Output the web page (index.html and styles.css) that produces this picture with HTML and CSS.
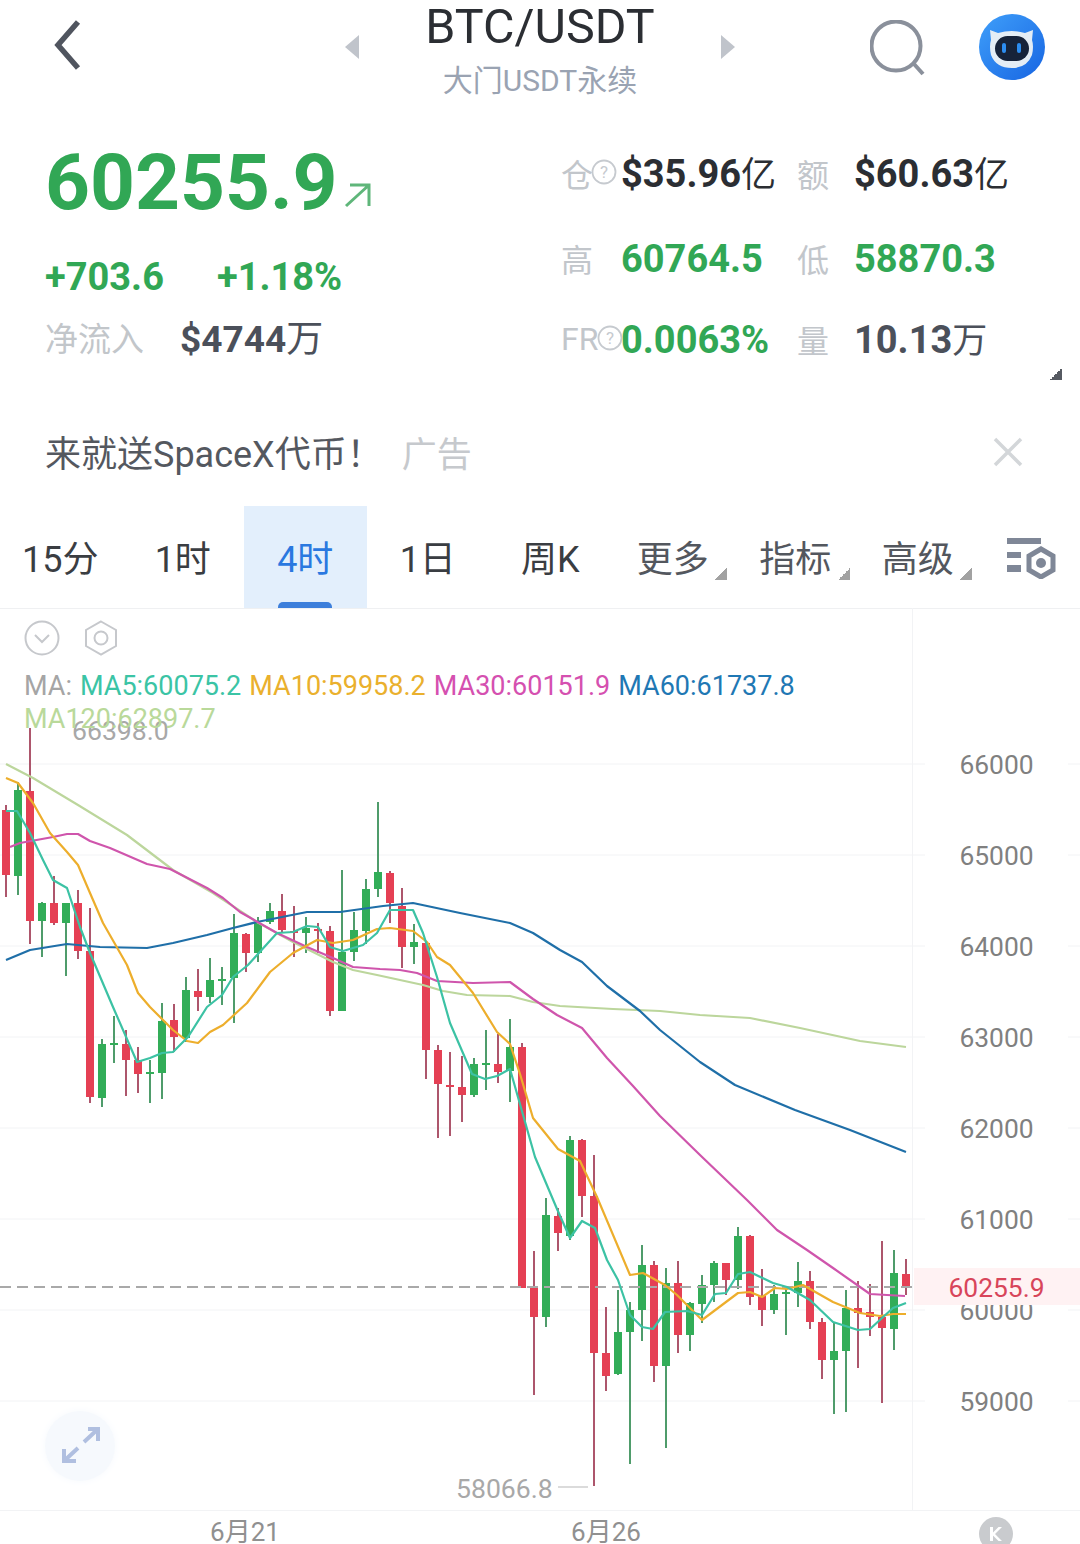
FILE: index.html
```html
<!DOCTYPE html>
<html lang="zh">
<head>
    <meta charset="utf-8">
    <title>BTC/USDT</title>
    <meta name="viewport" content="width=device-width, initial-scale=1">
    <link rel="stylesheet" href="styles.css">
</head>
<body>
<div class="page">

    <header class="topbar">
        <div class="topbar-left">
            <svg class="back-icon" width="36" height="56" viewBox="0 0 36 56"><path d="M26 4L6 27L26 50"/></svg>
            <svg class="nav-arrow" width="16" height="24" viewBox="0 0 16 24"><path d="M15 0V24L1 12Z"/></svg>
        </div>
        <div class="title-block">
            <div class="title">BTC/USDT</div>
            <div class="subtitle">大门USDT永续</div>
        </div>
        <div class="topbar-right">
            <svg class="nav-arrow next" width="16" height="24" viewBox="0 0 16 24"><path d="M1 0V24L15 12Z"/></svg>
            <svg class="search-icon" width="56" height="56" viewBox="0 0 56 56"><circle cx="26" cy="26" r="24.5"/><path d="M44 44L53 54"/></svg>
            <svg class="avatar" width="68" height="68" viewBox="0 0 68 68">
                <defs>
                    <linearGradient id="avatarBg" x1="0" y1="0" x2="1" y2="1">
                        <stop offset="0" stop-color="#3f9ffa"/>
                        <stop offset="1" stop-color="#1765e2"/>
                    </linearGradient>
                </defs>
                <circle cx="34" cy="34" r="33" fill="url(#avatarBg)"/>
                <path d="M12 17L20 20Q34 16 47 20L55 17L54 27Q56 33 54 42Q49 55 34 55Q18 55 13 42Q11 33 13 27Z" fill="#e4edf5"/>
                <rect x="17" y="23" width="34" height="25" rx="12.5" fill="#16233a"/>
                <rect x="24" y="30" width="4" height="10" rx="2" fill="#2c8df0"/>
                <rect x="39" y="30" width="4" height="10" rx="2" fill="#2c8df0"/>
            </svg>
        </div>
    </header>

    <section class="quote">
        <div class="quote-main">
            <div class="price-line">
                <span class="price">60255.9</span>
                <svg class="price-arrow" width="28" height="26" viewBox="0 0 28 26"><path d="M2 24L25 3M6 3H25V24"/></svg>
            </div>
            <div class="change-line">
                <span>+703.6</span>
                <span>+1.18%</span>
            </div>
            <div class="inflow-line">
                <span class="inflow-label">净流入</span>
                <span class="inflow-value">$4744<span class="unit">万</span></span>
            </div>
        </div>
        <div class="stats">
            <span class="stat-label">仓<svg class="help-icon" width="26" height="26" viewBox="0 0 26 26"><circle cx="13" cy="13" r="11.5"/><text x="13" y="19">?</text></svg></span>
            <span class="stat-value">$35.96<span class="unit">亿</span></span>
            <span class="stat-label">额</span>
            <span class="stat-value">$60.63<span class="unit">亿</span></span>

            <span class="stat-label">高</span>
            <span class="stat-value up">60764.5</span>
            <span class="stat-label">低</span>
            <span class="stat-value up">58870.3</span>

            <span class="stat-label">FR<svg class="help-icon overlap" width="26" height="26" viewBox="0 0 26 26"><circle cx="13" cy="13" r="11.5"/><text x="13" y="19">?</text></svg></span>
            <span class="stat-value up">0.0063%</span>
            <span class="stat-label">量</span>
            <span class="stat-value muted">10.13<span class="unit">万</span></span>
        </div>
        <span class="expand-corner"></span>
    </section>

    <section class="ad">
        <span class="ad-text">来就送SpaceX代币！</span>
        <span class="ad-tag">广告</span>
        <svg class="ad-close" width="30" height="30" viewBox="0 0 30 30"><path d="M2 2L28 28M28 2L2 28"/></svg>
    </section>

    <nav class="tabs">
        <div class="tab">15分</div>
        <div class="tab">1时</div>
        <div class="tab active">4时</div>
        <div class="tab">1日</div>
        <div class="tab">周K</div>
        <div class="tab menu">更多</div>
        <div class="tab menu">指标</div>
        <div class="tab menu">高级</div>
        <svg class="settings-icon" width="50" height="44" viewBox="0 0 50 44">
            <path class="bars" d="M1 3H35V9H1ZM1 17H15V23H1ZM1 30H15V37H1Z"/>
            <path class="hex" d="M35 14L47 21V35L35 42L23 35V21Z"/>
            <circle class="hex-dot" cx="35" cy="28" r="5"/>
        </svg>
    </nav>

    <section class="chart">
        <svg class="chart-canvas" width="1080" height="936" viewBox="0 608 1080 936">
            <path class="grid" d="M0 764H925M1068 764H1080M0 855H925M1068 855H1080M0 946H925M1068 946H1080M0 1037H925M1068 1037H1080M0 1128H925M1068 1128H1080M0 1219H925M1068 1219H1080M0 1310H925M1068 1310H1080M0 1401H925M1068 1401H1080"/>
            <path class="grid" d="M912.5 608V1510"/>

            <path class="wick-red" d="M6 805V897M30 728V944M54 876V925M78 890V959M90 908V1103M126 1030V1096M138 1047V1093M174 1004V1052M198 969V1011M246 933V972M282 894V933M294 906V957M318 923V953M330 926V1016M390 871V923M402 888V968M426 943V1079M438 1045V1138M450 1052V1136M462 1056V1122M498 1034V1083M522 1043V1288M534 1251V1395M558 1208V1251M582 1139V1217M594 1155V1486M606 1307V1391M654 1261V1382M678 1261V1353M726 1263V1295M750 1235V1305M762 1269V1326M810 1271V1329M822 1318V1379M858 1281V1368M870 1284V1336M882 1241V1403M906 1259V1295"/>
            <path class="wick-green" d="M18 782V895M42 902V957M66 903V976M102 1039V1107M114 1016V1063M150 1060V1103M162 1003V1099M186 977V1042M210 958V1003M222 967V1005M234 914V1023M258 917V962M270 903V924M306 917V953M342 870V1011M354 912V961M366 879V944M378 802V897M414 924V964M474 1058V1097M486 1030V1090M510 1019V1102M546 1198V1327M570 1136V1240M618 1290V1375M630 1302V1464M642 1245V1341M666 1268V1448M690 1302V1351M702 1275V1323M714 1261V1302M738 1227V1289M774 1285V1314M786 1287V1335M798 1262V1307M834 1322V1414M846 1290V1412M894 1250V1350"/>
            <path class="body-red" d="M6 810V875M30 791V921M54 903V923M78 903V951M90 951V1097M126 1044V1060M138 1060V1074M174 1020V1037M198 991V997M246 934V953M282 911V930M294 931V933M318 929V931M330 931V1011M390 873V903M402 906V947M426 943V1050M438 1050V1084M450 1085V1087M462 1087V1095M498 1064V1072M522 1047V1288M534 1288V1317M558 1216V1233M582 1140V1196M594 1196V1353M606 1353V1376M654 1265V1366M678 1283V1335M726 1263V1280M750 1236V1297M762 1296V1310M810 1281V1322M822 1322V1360M858 1308V1313M870 1312V1317M882 1317V1328M906 1274V1287"/>
            <path class="body-green" d="M18 790V876M42 903V921M66 903V923M102 1044V1098M114 1043V1045M150 1072V1074M162 1021V1073M186 990V1038M210 980V997M222 979V981M234 933V978M258 923V953M270 911V922M306 928V933M342 952V1011M354 930V952M366 889V931M378 872V889M414 942V947M474 1064V1095M486 1063V1065M510 1047V1071M546 1215V1317M570 1140V1236M618 1332V1374M630 1310V1332M642 1265V1310M666 1283V1366M690 1303V1335M702 1285V1304M714 1263V1285M738 1236V1280M774 1294V1310M786 1292V1294M798 1281V1293M834 1351V1360M846 1308V1351M894 1273V1329"/>

            <path class="last-line" d="M0 1287H912"/>

            <polyline class="ma ma120" points="6,764 33,778 78,805 127,835 173,870 213,893 257,922 293,942 333,962 353,970 377,975 400,980 423,985 443,991 467,995 510,996 533,1002 560,1006 613,1009 660,1011 700,1015 750,1018 800,1028 860,1041 906,1047"/>
            <polyline class="ma ma60" points="6,960 30,950 67,944 100,947 147,948 173,943 207,935 233,928 257,922 307,912 340,912 383,906 413,903 460,913 510,923 533,933 560,950 582,962 607,986 640,1011 660,1030 700,1062 735,1085 795,1110 850,1130 906,1152"/>
            <polyline class="ma ma30" points="10,847 20,843 53,837 67,834 78,834 90,841 110,848 147,864 170,869 207,888 223,898 240,912 277,933 307,947 333,958 353,967 380,969 400,970 417,973 437,981 473,983 510,982 533,999 557,1015 582,1028 607,1058 633,1086 660,1116 700,1155 747,1200 777,1230 807,1250 833,1268 870,1294 887,1295 905,1296"/>
            <polyline class="ma ma10" points="6,778 18,783 33,803 50,833 67,852 78,865 90,893 103,923 127,965 138,993 150,1007 173,1030 187,1041 198,1043 210,1032 223,1025 247,1003 270,972 293,953 317,940 333,943 353,940 377,929 390,928 413,931 427,942 437,957 450,965 473,993 497,1032 510,1044 520,1074 533,1118 558,1149 580,1161 597,1197 630,1275 643,1273 665,1285 677,1295 702,1320 738,1293 750,1292 762,1297 775,1288 787,1289 803,1285 833,1302 860,1313 880,1316 893,1314 906,1314"/>
            <polyline class="ma ma5" points="6,811 17,811 30,833 43,860 53,880 67,888 80,927 90,953 113,1007 137,1062 150,1058 162,1053 173,1052 188,1037 207,1007 222,995 233,977 248,965 277,933 293,932 307,926 318,927 330,947 343,951 363,945 377,933 390,910 413,910 423,933 437,977 450,1023 472,1074 485,1079 497,1076 510,1069 535,1157 557,1209 570,1238 582,1221 595,1228 607,1260 618,1280 630,1315 642,1327 653,1329 665,1312 687,1311 702,1315 715,1294 726,1293 738,1274 750,1272 773,1283 787,1287 810,1300 833,1322 858,1330 870,1329 893,1308 906,1303"/>

            <text class="axis" x="996.5" y="774">66000</text>
            <text class="axis" x="996.5" y="865">65000</text>
            <text class="axis" x="996.5" y="956">64000</text>
            <text class="axis" x="996.5" y="1047">63000</text>
            <text class="axis" x="996.5" y="1138">62000</text>
            <text class="axis" x="996.5" y="1229">61000</text>
            <text class="axis" x="996.5" y="1320">60000</text>
            <text class="axis" x="996.5" y="1411">59000</text>
            <rect class="last-bg" x="914" y="1268" width="166" height="37"/>
            <text class="axis last-price" x="996.5" y="1297">60255.9</text>

            <text class="extreme" x="72" y="740">66398.0</text>
            <text class="extreme" x="456" y="1498">58066.8</text>
            <path class="extreme-line" d="M558 1487H588"/>

            <path class="grid" d="M0 1510.5H1080"/>
            <text class="date" x="245" y="1541">6月21</text>
            <text class="date" x="606" y="1541">6月26</text>
        </svg>

        <div class="chart-tools">
            <svg class="tool-icon" width="36" height="36" viewBox="0 0 36 36"><circle cx="18" cy="18" r="16.5"/><path d="M11 15L18 22L25 15"/></svg>
            <svg class="tool-icon" width="36" height="36" viewBox="0 0 36 36"><path d="M18 1.5L33 10V26L18 34.5L3 26V10Z"/><circle cx="18" cy="18" r="6.5"/></svg>
        </div>
        <div class="legend">
            <span class="legend-name">MA:</span>
            <span class="ma5-text">MA5:60075.2</span>
            <span class="ma10-text">MA10:59958.2</span>
            <span class="ma30-text">MA30:60151.9</span>
            <span class="ma60-text">MA60:61737.8</span>
            <span class="ma120-text">MA120:62897.7</span>
        </div>

        <div class="zoom-button">
            <svg width="44" height="44" viewBox="0 0 44 44"><path d="M30 5H40V17M40 5L26 18M6 25V37H18M6 37L20 24"/></svg>
        </div>
        <div class="k-badge">
            <svg width="18" height="18" viewBox="0 0 18 18"><path d="M3 2H6V16H3ZM15 2L8 9L15 16H11.5L4.5 9L11.5 2Z"/></svg>
        </div>
    </section>
</div>
</body>
</html>
```

FILE: styles.css
```css
* {
    box-sizing: border-box;
}

body {
    margin: 0;
    background-color: #ffffff;
    font-family: Roboto, "Noto Sans CJK SC", sans-serif;
}

.page {
    position: relative;
    width: 1080px;
    height: 1544px;
    overflow: hidden;
}

/* top bar */
.topbar {
    display: grid;
    grid-template-columns: 1fr auto 1fr;
    height: 100px;
}

.topbar-left {
    display: flex;
    justify-content: space-between;
    padding: 18px 65px 0 52px;
}

.topbar-right {
    display: flex;
    align-items: flex-start;
    padding: 13px 0 0 65px;
}

.back-icon {
    fill: none;
    stroke: #50555f;
    stroke-width: 5.5;
}

.nav-arrow {
    margin-top: 17px;
    fill: #c0c4cb;
}

.nav-arrow.next {
    margin-top: 22px;
}

.search-icon {
    margin: 7px 0 0 134px;
    fill: none;
    stroke: #8a909b;
    stroke-width: 4;
}

.avatar {
    margin-left: 52px;
}

.title-block {
    text-align: center;
}

.title {
    font-size: 48.4px;
    line-height: 54px;
    color: #2b2e33;
}

.subtitle {
    font-size: 30px;
    line-height: 40px;
    margin-top: 7px;
    color: #9aa3b2;
}

/* quote block */
.quote {
    position: relative;
    display: flex;
    height: 310px;
}

.quote-main {
    width: 561px;
    padding: 37px 0 0 45px;
}

.price-line {
    display: flex;
    height: 90px;
    align-items: center;
}

.price {
    font-size: 78.4px;
    font-weight: 700;
    line-height: 90px;
    color: #31a755;
}

.price-arrow {
    margin: 26px 0 0 6px;
    fill: none;
    stroke: #5fb67a;
    stroke-width: 3;
}

.change-line {
    display: flex;
    gap: 53px;
    margin-top: 27px;
    font-size: 38px;
    font-weight: 700;
    line-height: 46px;
    color: #31a755;
}

.inflow-line {
    display: flex;
    margin-top: 17px;
    line-height: 46px;
}

.inflow-label {
    width: 135px;
    font-size: 33px;
    color: #c2c6ca;
}

.inflow-value {
    font-size: 37px;
    font-weight: 700;
    color: #4b505a;
}

.unit {
    font-weight: 400;
}

.stats {
    display: grid;
    grid-template-columns: 60px 176px 57px auto;
    grid-template-rows: 85px 81px 60px;
    padding-top: 44px;
    align-items: start;
}

.stat-label {
    display: flex;
    align-items: center;
    height: 60px;
    margin-top: -1px;
    font-size: 32px;
    color: #c2c6cb;
    white-space: nowrap;
}

.stat-value {
    font-size: 38px;
    font-weight: 700;
    line-height: 60px;
    color: #2b2e33;
    white-space: nowrap;
}

.stat-value .unit {
    font-size: 35px;
}

.stat-value.up {
    color: #31a755;
}

.stat-value.muted {
    color: #4b505a;
}

.help-icon {
    flex: none;
    margin: -3px 0 0 -2px;
    fill: none;
    stroke: #c6cacf;
    stroke-width: 1.8;
}

.help-icon text {
    fill: #c6cacf;
    stroke: none;
    font-size: 17px;
    text-anchor: middle;
}

.help-icon.overlap {
    margin-left: -1px;
}

.expand-corner {
    position: absolute;
    right: 18px;
    bottom: 30px;
    width: 12px;
    height: 12px;
    background: linear-gradient(135deg, transparent 50%, #565a62 50%);
}

/* ad strip */
.ad {
    display: flex;
    align-items: center;
    height: 96px;
    padding: 0 57px 14px 45px;
}

.ad-text {
    font-size: 36px;
    color: #54585f;
    white-space: nowrap;
}

.ad-tag {
    margin-left: 19px;
    font-size: 35px;
    color: #c6c9cd;
}

.ad-close {
    margin: 2px 0 0 auto;
    fill: none;
    stroke: #d3d6d9;
    stroke-width: 3.5;
}

/* period tabs */
.tabs {
    display: flex;
    height: 103px;
    margin-left: -1px;
    border-bottom: 1px solid #eff0f2;
}

.tab {
    position: relative;
    width: 122.5px;
    padding-top: 29px;
    text-align: center;
    font-size: 36px;
    line-height: 50px;
    color: #3a3d42;
}

.tab.active {
    background-color: #e3effc;
    color: #2a78e0;
}

.tab.active::after {
    content: "";
    position: absolute;
    left: 34px;
    bottom: 0;
    width: 54px;
    height: 6px;
    border-radius: 5px 5px 0 0;
    background-color: #3d7fdb;
}

.tab.menu {
    color: #53575e;
}

.tab.menu::after {
    content: "";
    position: absolute;
    right: 7px;
    top: 62px;
    width: 12px;
    height: 12px;
    background: linear-gradient(135deg, transparent 50%, #a2a2a2 50%);
}

.settings-icon {
    margin: 29px 0 0 27px;
}

.settings-icon .bars {
    fill: #7f8797;
}

.settings-icon .hex {
    fill: #ffffff;
    stroke: #7f8797;
    stroke-width: 5;
}

.settings-icon .hex-dot {
    fill: #7f8797;
}

/* chart */
.chart {
    position: relative;
    height: 935px;
    padding: 11px 0 0 24px;
}

.chart-canvas {
    position: absolute;
    left: 0;
    top: -1px;
}

.chart-tools {
    position: relative;
    display: flex;
    gap: 23px;
}

.tool-icon {
    fill: none;
    stroke: #c6c8cc;
    stroke-width: 2;
}

.legend {
    position: relative;
    display: flex;
    flex-wrap: wrap;
    column-gap: 8px;
    width: 860px;
    margin-top: 14px;
    font-size: 27px;
    line-height: 33px;
    color: #a5a5a5;
}

.ma5-text { color: #3bc4a5; }
.ma10-text { color: #eab02d; }
.ma30-text { color: #d550b0; }
.ma60-text { color: #1f78b4; }
.ma120-text { color: #b9d99a; }

.grid {
    fill: none;
    stroke: #f2f3f5;
    stroke-width: 1;
}

.wick-red,
.wick-green,
.body-red,
.body-green {
    fill: none;
}

.wick-red {
    stroke: #ad566c;
    stroke-width: 2;
}

.wick-green {
    stroke: #4f9c6b;
    stroke-width: 2;
}

.body-red {
    stroke: #e54054;
    stroke-width: 8;
}

.body-green {
    stroke: #32ad58;
    stroke-width: 8;
}

.last-line {
    fill: none;
    stroke: #a9a9a9;
    stroke-width: 2;
    stroke-dasharray: 11 6;
}

.ma {
    fill: none;
    stroke-width: 2.2;
    stroke-linejoin: round;
}

.ma5 { stroke: #3cc2a4; }
.ma10 { stroke: #edae2c; }
.ma30 { stroke: #cf55ac; }
.ma60 { stroke: #1f6fa8; }
.ma120 { stroke: #bcd69c; }

.last-bg {
    fill: #fff2f3;
}

.axis {
    fill: #808080;
    font-size: 26.4px;
    text-anchor: middle;
}

.axis.last-price {
    fill: #d8455a;
}

.extreme {
    fill: #a8a8a8;
    font-size: 26.6px;
}

.extreme-line {
    fill: none;
    stroke: #cfcfcf;
    stroke-width: 1.5;
}

.date {
    fill: #909090;
    font-size: 26px;
    text-anchor: middle;
}

.zoom-button {
    position: absolute;
    left: 45px;
    top: 802px;
    display: flex;
    align-items: center;
    justify-content: center;
    width: 70px;
    height: 70px;
    border-radius: 50%;
    background-color: #f6f9fd;
    box-shadow: 0 0 8px #f6f9fd;
}

.zoom-button svg {
    fill: none;
    stroke: #b0bfe0;
    stroke-width: 4;
}

.k-badge {
    position: absolute;
    left: 979px;
    top: 908px;
    display: flex;
    align-items: center;
    justify-content: center;
    width: 34px;
    height: 34px;
    border-radius: 50%;
    background-color: #c9cbce;
}

.k-badge svg {
    fill: #ffffff;
}
```
